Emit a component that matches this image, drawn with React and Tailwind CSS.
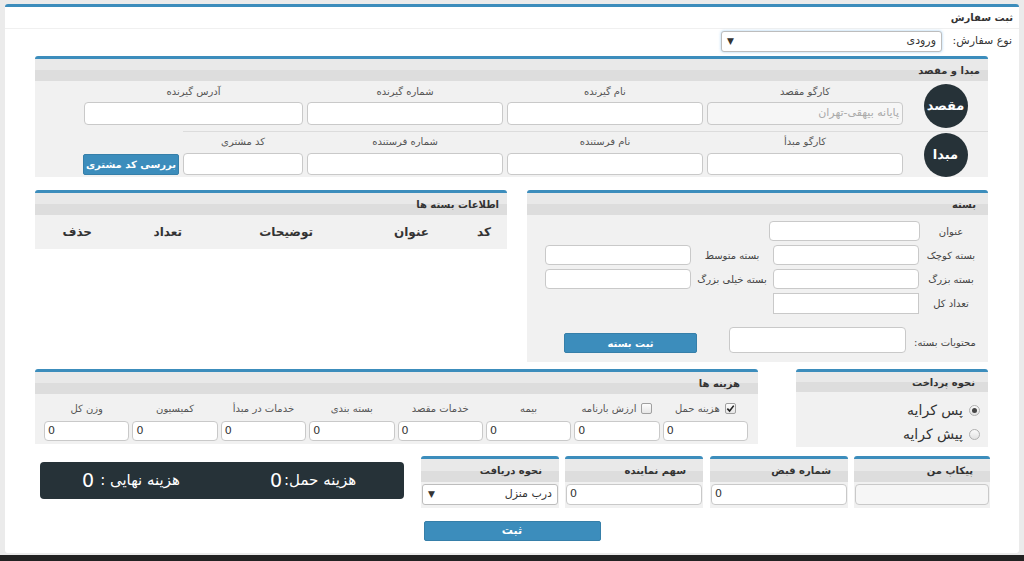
import React from 'react';

function Box({ title, head = 'h-[22px]', pad = 'pr-[10px]', className = '', children }) {
  return (
    <div className={`border-t-[3px] border-[#3c8dbc] rounded-t-[3px] bg-[#f1f1f1] ${className}`}>
      <div
        className={`${head} ${pad} flex items-center text-[10px] font-bold text-[#333] bg-[linear-gradient(#e9e9e9_50%,#dddddd_50%)]`}
      >
        {title}
      </div>
      {children}
    </div>
  );
}

function Input({ className = '', value = '', muted = false }) {
  return (
    <div
      className={`border border-[#c9c9c9] rounded-[4px] flex items-center px-[3px] text-[11px] ${
        muted ? 'bg-[#f6f6f6] text-[#aaa]' : 'bg-white text-[#333]'
      } ${className}`}
    >
      {value}
    </div>
  );
}

function Zero({ className = '' }) {
  return (
    <div
      dir="ltr"
      className={`border border-[#c9c9c9] rounded-[4px] bg-white flex items-center px-[3px] text-[11px] text-[#333] ${className}`}
    >
      0
    </div>
  );
}

function Field({ label, w, h = 'h-[23px]', gap = 'mb-[3px]', value, muted }) {
  return (
    <div className={`flex flex-col items-center ${w}`}>
      <div className={`h-[14px] leading-[14px] text-[10px] text-[#555] ${gap}`}>{label}</div>
      <Input className={`w-full ${h}`} value={value} muted={muted} />
    </div>
  );
}

function Circle({ children }) {
  return (
    <div className="w-[44px] h-[44px] rounded-full bg-[#263238] text-white text-[13px] font-bold flex items-center justify-center">
      {children}
    </div>
  );
}

function Check({ on }) {
  return (
    <span className="w-[11px] h-[11px] border border-[#a0a0a0] rounded-[2px] bg-[linear-gradient(#fdfdfd,#e6e6e6)] flex items-center justify-center">
      {on && (
        <svg width="9" height="9" viewBox="0 0 10 10">
          <path d="M1.5 5.2 L4 7.8 L8.6 1.8" fill="none" stroke="#222" strokeWidth="1.8" />
        </svg>
      )}
    </span>
  );
}

function Radio({ on, label }) {
  return (
    <div className="flex items-center gap-[6px] h-[24px]">
      <span className="w-[11px] h-[11px] rounded-full border border-[#b0b0b0] bg-[linear-gradient(#fafafa,#e2e2e2)] flex items-center justify-center">
        {on && <span className="w-[5px] h-[5px] rounded-full bg-[#444]" />}
      </span>
      <span className="text-[14px] text-[#333]">{label}</span>
    </div>
  );
}

function Select({ value, className = '' }) {
  return (
    <div
      className={`border border-[#bdbdbd] rounded-[3px] bg-white flex items-center justify-between px-[5px] text-[11px] text-[#333] ${className}`}
    >
      <span>{value}</span>
      <span className="text-[9px]">▼</span>
    </div>
  );
}

const costs = [
  { label: 'هزینه حمل', check: true, on: true },
  { label: 'ارزش بارنامه', check: true, on: false },
  { label: 'بیمه' },
  { label: 'خدمات مقصد' },
  { label: 'بسته بندی' },
  { label: 'خدمات در مبدأ' },
  { label: 'کمیسیون' },
  { label: 'وزن کل' },
];

function Mini({ title, children, w = 'w-[138px]' }) {
  return (
    <div className={`${w} border-t-[3px] border-[#3c8dbc] rounded-t-[3px] bg-[#f1f1f1] pb-[3px]`}>
      <div className="h-[23px] flex items-center pr-[17px] text-[10px] font-bold text-[#333] bg-[linear-gradient(#e9e9e9_50%,#dddddd_50%)]">
        {title}
      </div>
      <div className="px-[1px] pt-[2px]">{children}</div>
    </div>
  );
}

export default function App() {
  return (
    <div
      dir="rtl"
      className="h-[561px] flex flex-col bg-[#ebebeb] pt-[4px] font-['DejaVu_Sans',sans-serif] text-[#333] overflow-hidden"
    >
      <div className="mx-[5px] h-[549px] bg-white border-t-[3px] border-[#3c8dbc] rounded-[3px] flex flex-col">
        <div className="h-[22px] border-b border-[#f0f0f0] flex items-center pr-[6px] text-[10px] font-bold">
          ثبت سفارش
        </div>

        <div className="mt-[2px] flex items-center pr-[7px] gap-[3px] h-[21px]">
          <span className="w-[67px] text-[11px] text-[#333] whitespace-nowrap">نوع سفارش:</span>
          <Select value="ورودی" className="w-[221px] h-[21px] border-[#7aa9d6] shadow-[0_0_3px_rgba(102,175,233,0.6)]" />
        </div>

        <div className="mr-[31px] ml-[30px]">
          {/* مبدا و مقصد */}
          <Box title="مبدا و مقصد" className="mt-[4px]" pad="pr-[8px]">
            <div className="flex">
              <div className="w-[85px] flex items-center justify-center">
                <Circle>مقصد</Circle>
              </div>
              <div className="flex gap-[4px] pt-[4px] pb-[6px]">
                <Field label="کارگو مقصد" w="w-[196px]" value="پایانه بیهقی-تهران" muted />
                <Field label="نام گیرنده" w="w-[196px]" />
                <Field label="شماره گیرنده" w="w-[196px]" />
                <Field label="آدرس گیرنده" w="w-[219px]" />
              </div>
            </div>
            <div className="h-px bg-[#dcdcdc] ml-[148px]" />
            <div className="flex">
              <div className="w-[85px] flex items-center justify-center">
                <Circle>مبدا</Circle>
              </div>
              <div className="flex items-end gap-[4px] pt-[3px] pb-[2px]">
                <Field label="کارگو مبدأ" w="w-[196px]" h="h-[22px]" gap="mb-[4px]" />
                <Field label="نام فرستنده" w="w-[196px]" h="h-[22px]" gap="mb-[4px]" />
                <Field label="شماره فرستنده" w="w-[196px]" h="h-[22px]" gap="mb-[4px]" />
                <Field label="کد مشتری" w="w-[120px]" h="h-[22px]" gap="mb-[4px]" />
                <button className="w-[96px] h-[21px] bg-[#3c8dbc] border border-[#367fa9] rounded-[2px] text-white text-[10px] font-bold">
                  بررسی کد مشتری
                </button>
              </div>
            </div>
          </Box>

          {/* بسته + اطلاعات */}
          <div className="mt-[13px] flex gap-[20px] items-start">
            <Box title="بسته" className="w-[461px]" pad="pr-[12px]">
              <div className="pt-[6px] pb-[9px] pr-[6px] flex flex-col gap-[4px] text-[10px] text-[#444] whitespace-nowrap">
                <div className="flex items-center h-[20px]">
                  <span className="w-[62px] text-center">عنوان</span>
                  <Input className="w-[151px] h-[20px]" />
                </div>
                <div className="flex items-center h-[20px]">
                  <span className="w-[62px] text-center">بسته کوچک</span>
                  <Input className="w-[146px] h-[20px] mr-[1px]" />
                  <span className="w-[76px] mr-[3px] text-center">بسته متوسط</span>
                  <Input className="w-[146px] h-[20px] mr-[3px]" />
                </div>
                <div className="flex items-center h-[20px]">
                  <span className="w-[62px] text-center">بسته بزرگ</span>
                  <Input className="w-[146px] h-[20px] mr-[1px]" />
                  <span className="w-[76px] mr-[3px] text-center">بسته خیلی بزرگ</span>
                  <Input className="w-[146px] h-[20px] mr-[3px]" />
                </div>
                <div className="flex items-center h-[21px]">
                  <span className="w-[62px] text-center">تعداد کل</span>
                  <Input className="w-[146px] h-[21px] mr-[1px] rounded-none" />
                </div>
                <div className="flex items-end mt-[9px]">
                  <span className="w-[74px] text-center self-center pt-[4px]">محتویات بسته:</span>
                  <Input className="w-[177px] h-[26px] mr-[2px]" />
                  <button className="w-[133px] h-[20px] mr-[32px] bg-[#3c8dbc] border border-[#367fa9] rounded-[2px] text-white text-[10px] font-bold">
                    ثبت بسته
                  </button>
                </div>
              </div>
            </Box>

            <Box title="اطلاعات بسته ها" className="flex-1" pad="pr-[8px]">
              <div className="h-[34px] flex items-center pr-[16px] text-[12px] font-bold text-[#333]">
                <span className="w-[62px]">کد</span>
                <span className="w-[116px]">عنوان</span>
                <span className="w-[131px]">توضیحات</span>
                <span className="w-[90px]">تعداد</span>
                <span>حذف</span>
              </div>
            </Box>
          </div>

          {/* پرداخت + هزینه ها */}
          <div className="mt-[7px] flex justify-between items-start">
            <Box title="نحوه پرداخت" head="h-[20px]" className="w-[192px]" pad="pr-[13px]">
              <div className="pt-[6px] pb-[1px] pr-[8px]">
                <Radio on label="پس کرایه" />
                <Radio label="پیش کرایه" />
              </div>
            </Box>

            <Box title="هزینه ها" className="w-[723px]" pad="pr-[18px]">
              <div className="grid grid-cols-8 gap-x-[3px] pr-[10px] pl-[9px] pt-[7px] pb-[3px]">
                {costs.map((c) => (
                  <div key={c.label} className="flex flex-col items-center">
                    <div className="h-[14px] flex items-center gap-[5px] text-[10px] text-[#555] mb-[6px] whitespace-nowrap">
                      {c.check && <Check on={c.on} />}
                      <span>{c.label}</span>
                    </div>
                    <Zero className="w-full h-[20px]" />
                  </div>
                ))}
              </div>
            </Box>
          </div>
        </div>

        {/* پایین */}
        <div className="mt-[9px] mr-[29px] ml-[35px] flex items-start">
          <Mini title="پیکاپ من" w="w-[136px]">
            <Input className="w-full h-[21px]" muted />
          </Mini>
          <div className="mr-[6px]">
            <Mini title="شماره قبض">
              <Zero className="w-full h-[21px]" />
            </Mini>
          </div>
          <div className="mr-[7px]">
            <Mini title="سهم نماینده">
              <Zero className="w-full h-[21px]" />
            </Mini>
          </div>
          <div className="mr-[6px]">
            <Mini title="نحوه دریافت">
              <Select value="درب منزل" className="w-full h-[21px]" />
            </Mini>
          </div>
          <div className="mr-[17px] mt-[6px] w-[364px] h-[37px] bg-[#263238] rounded-[4px] flex items-center text-white text-[15px]">
            <div className="w-1/2 flex justify-center items-center gap-[2px]">
              <span>هزینه حمل:</span>
              <span className="text-[19px]">0</span>
            </div>
            <div className="w-1/2 flex justify-center items-center gap-[6px]">
              <span>هزینه نهایی :</span>
              <span className="text-[19px]">0</span>
            </div>
          </div>
        </div>

        <div className="mt-[13px] flex justify-center">
          <button className="w-[177px] h-[20px] bg-[#3c8dbc] border border-[#367fa9] rounded-[2px] text-white text-[11px] font-bold">
            ثبت
          </button>
        </div>
      </div>
      <div className="mt-[2px] flex-1 bg-[#222]" />
    </div>
  );
}
